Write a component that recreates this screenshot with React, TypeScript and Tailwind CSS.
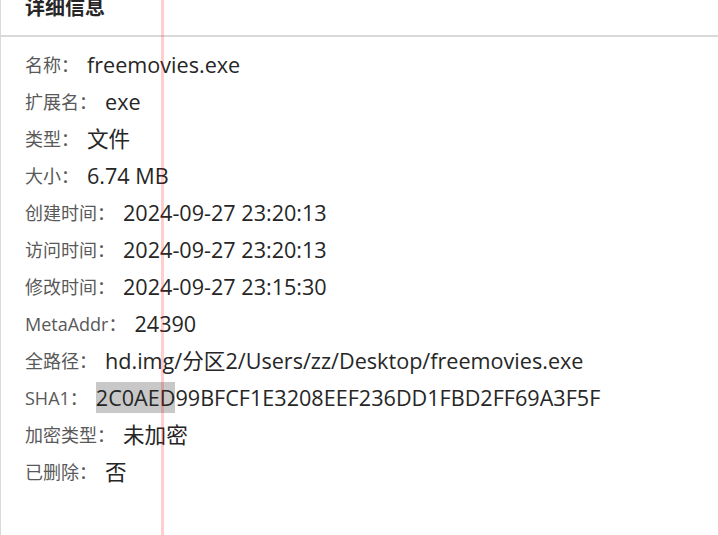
import React from 'react'

type Row = { label: string; value: React.ReactNode }

const mark = (
  <>
    <span className="bg-[#c8c8c8] inline-block leading-[31px]">2C0AED</span>
    99BFCF1E3208EEF236DD1FBD2FF69A3F5F
  </>
)

const rows: Row[] = [
  { label: '名称：', value: 'freemovies.exe' },
  { label: '扩展名：', value: 'exe' },
  { label: '类型：', value: '文件' },
  { label: '大小：', value: '6.74 MB' },
  { label: '创建时间：', value: '2024-09-27 23:20:13' },
  { label: '访问时间：', value: '2024-09-27 23:20:13' },
  { label: '修改时间：', value: '2024-09-27 23:15:30' },
  { label: 'MetaAddr：', value: '24390' },
  { label: '全路径：', value: 'hd.img/分区2/Users/zz/Desktop/freemovies.exe' },
  { label: 'SHA1：', value: mark },
  { label: '加密类型：', value: '未加密' },
  { label: '已删除：', value: '否' },
]

export default function App() {
  return (
    <div className="relative h-screen overflow-hidden bg-white border-l border-[#d9d9d9] font-['Open_Sans','Noto_Sans_CJK_SC',sans-serif]">
      {/* header, scrolled partly out of view */}
      <div className="h-[37px] border-b-2 border-[#d9d9d9] px-6 overflow-hidden">
        <h2 className="-mt-[6px] text-[20px] leading-[28px] font-bold text-[#262626]">详细信息</h2>
      </div>

      <div className="pt-[10px] px-6">
        {rows.map(r => (
          <div key={r.label} className="flex items-center h-[37px] whitespace-nowrap">
            <span className="text-[18px] text-[#595959]">{r.label}</span>
            <span className="ml-2 text-[21.6px] text-[#262626]">{r.value}</span>
          </div>
        ))}
      </div>

      {/* guide line */}
      <div className="absolute top-0 bottom-0 left-[160px] w-[3px] bg-[#ff000030] pointer-events-none" />
    </div>
  )
}
